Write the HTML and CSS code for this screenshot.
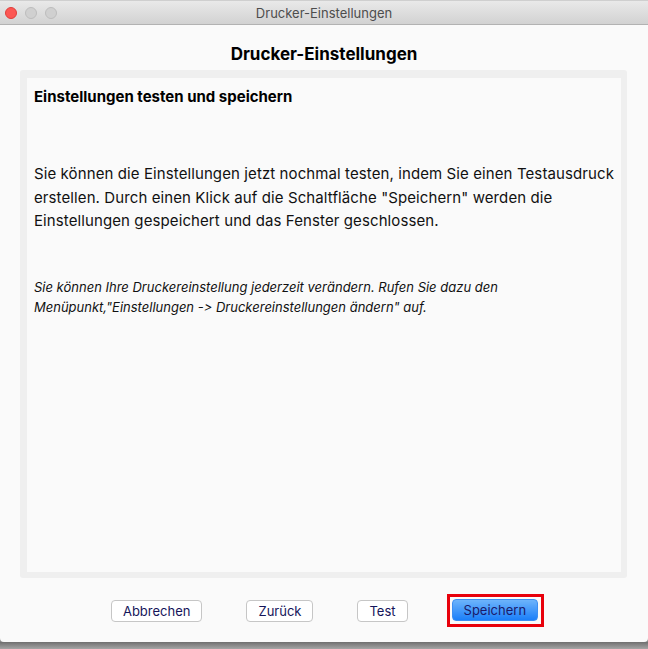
FILE: index.html
```html
<!DOCTYPE html>
<html lang="de">
<head>
<meta charset="utf-8">
<title>Drucker-Einstellungen</title>
<link rel="stylesheet" href="styles.css">
</head>
<body>
<div class="window">
  <div class="titlebar">
    <div class="lights">
      <span class="light red"></span>
      <span class="light"></span>
      <span class="light"></span>
    </div>
    <div class="title">Drucker-Einstellungen</div>
  </div>
  <h1 class="heading">Drucker-Einstellungen</h1>
  <div class="panel">
    <div class="content">
      <h2 class="subhead">Einstellungen testen und speichern</h2>
      <p class="text">Sie können die Einstellungen jetzt nochmal testen, indem Sie einen Testausdruck erstellen. Durch einen Klick auf die Schaltfläche "Speichern" werden die Einstellungen gespeichert und das Fenster geschlossen.</p>
      <p class="note">Sie können Ihre Druckereinstellung jederzeit verändern. Rufen Sie dazu den Menüpunkt,"Einstellungen -&gt; Druckereinstellungen ändern" auf.</p>
    </div>
  </div>
  <div class="buttons">
    <button class="btn">Abbrechen</button>
    <button class="btn">Zurück</button>
    <button class="btn">Test</button>
    <span class="highlight"><button class="btn primary">Speichern</button></span>
  </div>
</div>
<div class="shadow"></div>
</body>
</html>
```
FILE: styles.css
```css
* { box-sizing: border-box; }
html, body {
  margin: 0;
  padding: 0;
  background: #8a8a8a;
  font-family: Inter, "Liberation Sans", Arial, sans-serif;
  font-feature-settings: "calt" 0;
  font-variant-ligatures: none;
}
.window {
  height: 642px;
  background: #fafafa;
  display: flex;
  flex-direction: column;
  border-radius: 0 0 4px 4px;
}
.titlebar {
  height: 25px;
  border-top: 1px solid #cfcfcf;
  border-bottom: 1px solid #b2b2b2;
  background: linear-gradient(#e9e9e9, #d2d2d2);
  display: flex;
  align-items: center;
  position: relative;
}
.lights {
  display: flex;
  gap: 8px;
  padding-left: 5px;
}
.light {
  width: 12px;
  height: 12px;
  border-radius: 50%;
  background: #d0d0d0;
  border: 1px solid #bdbdbd;
}
.light.red {
  background: #fc5753;
  border-color: #df3e3a;
}
.title {
  position: absolute;
  left: 0;
  right: 0;
  text-align: center;
  font-size: 13px;
  color: #4d4d4d;
}
.heading {
  margin: 19px 0 6px;
  font-size: 17px;
  line-height: 20px;
  font-weight: bold;
  text-align: center;
  color: #000;
}
.panel {
  margin: 0 21px 0 20px;
  height: 508px;
  background: #efefef;
  border-radius: 3px;
  padding: 8px 6px 6px 7px;
}
.content {
  height: 100%;
  background: #fafafa;
  padding: 10px 7px 0;
}
.subhead {
  margin: 0;
  font-size: 15px;
  line-height: 18px;
  font-weight: bold;
  color: #000;
}
.text {
  margin: 56px 0 0;
  font-size: 15px;
  letter-spacing: 0.1px;
  line-height: 23.5px;
  color: #111;
}
.note {
  margin: 44px 0 0;
  max-width: 505px;
  font-size: 13px;
  line-height: 20px;
  font-style: italic;
  color: #111;
}
.buttons {
  display: flex;
  justify-content: center;
  align-items: center;
  gap: 44px;
  margin-top: 16px;
  padding-left: 7px;
}
.btn {
  font-family: Inter, "Liberation Sans", Arial, sans-serif;
  font-size: 13px;
  color: #15155a;
  height: 22px;
  padding: 0 11px;
  background: #fff;
  border: 1px solid #c6c6c6;
  border-radius: 4px;
  line-height: 20px;
}
.btn.primary {
  background: linear-gradient(#6db4fb, #1b7ff9);
  border-color: #3c8ff2;
  color: #1a1a6a;
}
.highlight {
  display: inline-flex;
  border: 3px solid #e8000b;
  padding: 2px 3px 3px 2px;
  margin-left: -5px;
}
.shadow {
  height: 7px;
  background: linear-gradient(#6f6f6f, #a5a5a5);
}
```
